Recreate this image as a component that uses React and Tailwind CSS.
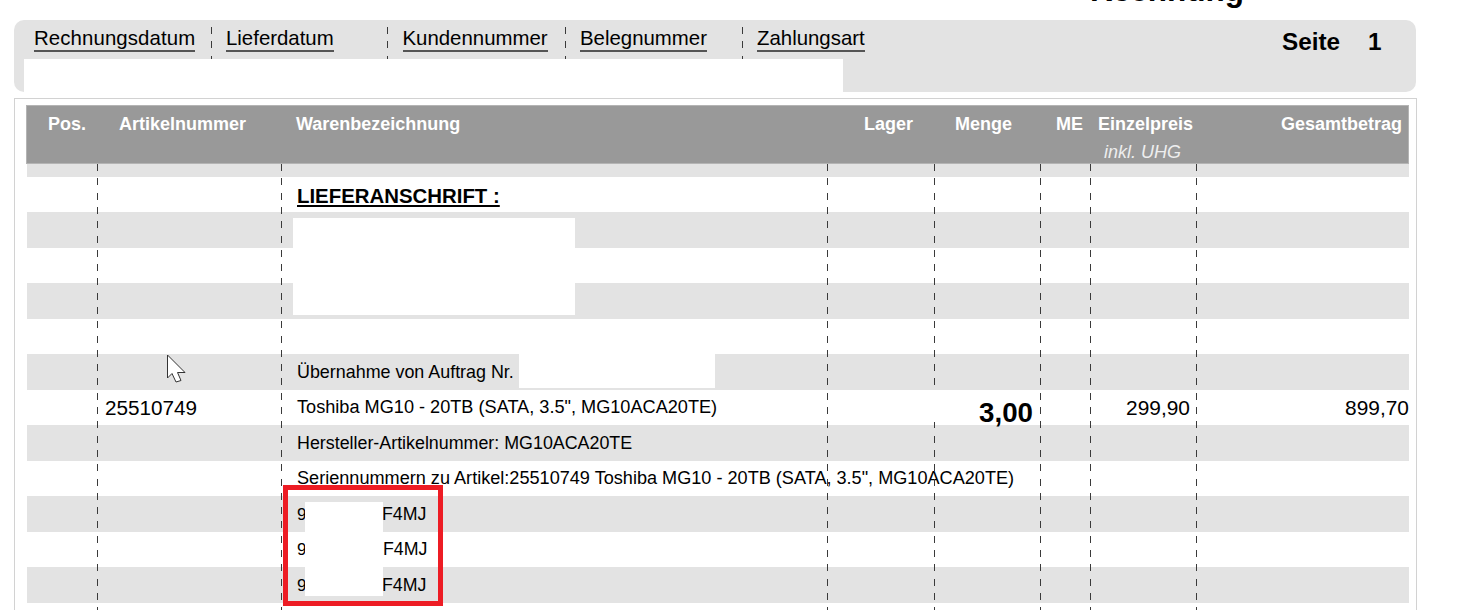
const rowGrid = "grid grid-cols-[71px_184px_546px_107px_106px_50px_106px_213px]";
const stripeGrid = "grid grid-cols-[70px_184px_546px_107px_106px_50px_106px_213px]";
const dashes = "bg-[repeating-linear-gradient(to_bottom,#3a3a3a_0_7px,transparent_7px_14.3px)]";

function Field({ label, width, offset, first }) {
  return (
    <div className={`flex h-full ${width}`}>
      {!first && <div className={`mt-[7px] w-px ${dashes}`} />}
      <span className={`mt-[7px] h-fit border-b-2 border-[#555] text-[20.4px] leading-[23px] ${offset}`}>
        {label}
      </span>
    </div>
  );
}

function Row({ shaded, children }) {
  return (
    <div className={`${stripeGrid} ml-px h-[35.5px] items-center whitespace-nowrap ${shaded ? "bg-[#e3e3e3]" : "bg-white"}`}>
      {children}
    </div>
  );
}

function TextRow({ shaded, size, children }) {
  return (
    <Row shaded={shaded}>
      <div className={`col-start-3 pl-[16px] pt-[1px] ${size}`}>{children}</div>
    </Row>
  );
}

function SerialRow({ shaded, gap }) {
  return (
    <Row shaded={shaded}>
      <div className="col-start-3 flex items-baseline pl-[16px] pt-[1px] text-[17.75px]">
        <span className="text-[17px]">9</span>
        <span className={gap}>F4MJ</span>
      </div>
    </Row>
  );
}

export default function App() {
  return (
    <div className="w-[1466px] h-[610px] overflow-hidden bg-white text-black font-['Liberation_Sans',Arial,sans-serif]">
      {/* title is cut off by the top of the page */}
      <div className="flex h-5 pl-[1090px]">
        <div className="-mt-[28px] h-[36px] text-[31.5px] leading-[36px] font-bold">Rechnung</div>
      </div>

      {/* Kopfzeile */}
      <div className="ml-[14px] h-[72px] w-[1402px] rounded-[10px] bg-[#e3e3e3]">
        <div className="flex h-[39px]">
          <Field label="Rechnungsdatum" width="w-[197px]" offset="ml-[20px] tracking-[0.1px]" first />
          <Field label="Lieferdatum" width="w-[176px]" offset="ml-[14px]" />
          <Field label="Kundennummer" width="w-[178px]" offset="ml-[14.5px]" />
          <Field label="Belegnummer" width="w-[177px]" offset="ml-[14px]" />
          <Field label="Zahlungsart" width="w-[400px]" offset="ml-[14px]" />
          <div className="ml-[140px] mt-[8px] flex text-[24.3px] leading-[28px] font-bold">
            <span>Seite</span>
            <span className="ml-[28px]">1</span>
          </div>
        </div>
        <div className="ml-[10px] h-[33px] w-[819px] bg-white" />
      </div>

      {/* Tabelle */}
      <div className="ml-[14px] mt-[6px] h-[520px] w-[1403px] border border-b-0 border-[#d2d2d2] pl-[11px] pt-[6px]">
        <div className={`${rowGrid} h-[59px] w-[1383px] border border-[#b4b4b4] bg-[#999999] text-[18px] leading-[20px] font-bold text-white`}>
          <div className="pl-[21px] pt-[8px]">Pos.</div>
          <div className="pl-[21px] pt-[8px]">Artikelnummer</div>
          <div className="pl-[14px] pt-[8px]">Warenbezeichnung</div>
          <div className="pl-[36px] pt-[8px]">Lager</div>
          <div className="pl-[20px] pt-[8px]">Menge</div>
          <div className="pl-[15px] pt-[8px]">ME</div>
          <div className="pl-[7px] pt-[8px]">
            <div>Einzelpreis</div>
            <div className="mt-[8px] pl-[6px] font-normal italic text-[#eeeeee]">inkl. UHG</div>
          </div>
          <div className="pr-[8px] pt-[8px] text-right">Gesamtbetrag</div>
        </div>

        <div className="relative w-[1383px]">
          <div className="ml-px h-[12.5px] bg-[#e3e3e3]" />
          <Row>
            <div className="col-start-3 pl-[16px] pt-[4px] text-[20.4px] font-bold underline decoration-2 underline-offset-2">
              LIEFERANSCHRIFT :
            </div>
          </Row>
          <Row shaded />
          <Row />
          <Row shaded />
          <Row />
          <TextRow shaded size="text-[17.9px]">Übernahme von Auftrag Nr.</TextRow>
          <Row>
            <div className="col-start-2 pl-[8px] text-[20.7px]">25510749</div>
            <div className="pl-[16px] text-[18.15px]">Toshiba MG10 - 20TB (SATA, 3.5", MG10ACA20TE)</div>
            <div className="relative z-10 col-start-5 h-[32px] self-start bg-white pr-[7px] pt-[7px] text-right text-[27.7px] leading-[32px] font-bold">
              3,00
            </div>
            <div className="col-start-7 pr-[6px] text-right text-[20.9px]">299,90</div>
            <div className="text-right text-[20.9px]">899,70</div>
          </Row>
          <TextRow shaded size="text-[17.85px]">Hersteller-Artikelnummer: MG10ACA20TE</TextRow>
          <TextRow size="text-[18.13px]">Seriennummern zu Artikel:25510749 Toshiba MG10 - 20TB (SATA, 3.5", MG10ACA20TE)</TextRow>
          <SerialRow shaded gap="ml-[75.5px]" />
          <SerialRow gap="ml-[76.5px]" />
          <SerialRow shaded gap="ml-[75.5px]" />
          <Row />

          {/* dashed column lines */}
          <div className={`${rowGrid} absolute left-0 top-0 h-[446px] w-[1383px]`}>
            <div />
            <div className={`w-px ${dashes}`} />
            <div className={`w-px ${dashes}`} />
            <div className={`w-px ${dashes}`} />
            <div className={`w-px ${dashes}`} />
            <div className={`w-px ${dashes}`} />
            <div className={`w-px ${dashes}`} />
            <div className={`w-px ${dashes}`} />
          </div>

          {/* redacted blocks */}
          <div className="absolute left-[267px] top-[54px] h-[97px] w-[282px] bg-white" />
          <div className="absolute left-[493px] top-[190px] h-[34px] w-[196px] bg-white" />
          <div className="absolute left-[279px] top-[338px] h-[94px] w-[78px] bg-white" />

          {/* red marker from the screenshot */}
          <div className="absolute left-[257px] top-[321px] h-[121px] w-[160px] border-[5px] border-[#ed1c24]" />

          {/* mouse pointer */}
          <svg className="absolute left-[140px] top-[190px]" width="22" height="30" viewBox="0 0 22 30">
            <path
              d="M1.5 1 V24 L6 19.5 L10 28 L15 26.5 L11.5 18.5 H19 Z"
              fill="#fff"
              stroke="#333"
              strokeWidth="1"
            />
          </svg>
        </div>
      </div>
    </div>
  );
}
